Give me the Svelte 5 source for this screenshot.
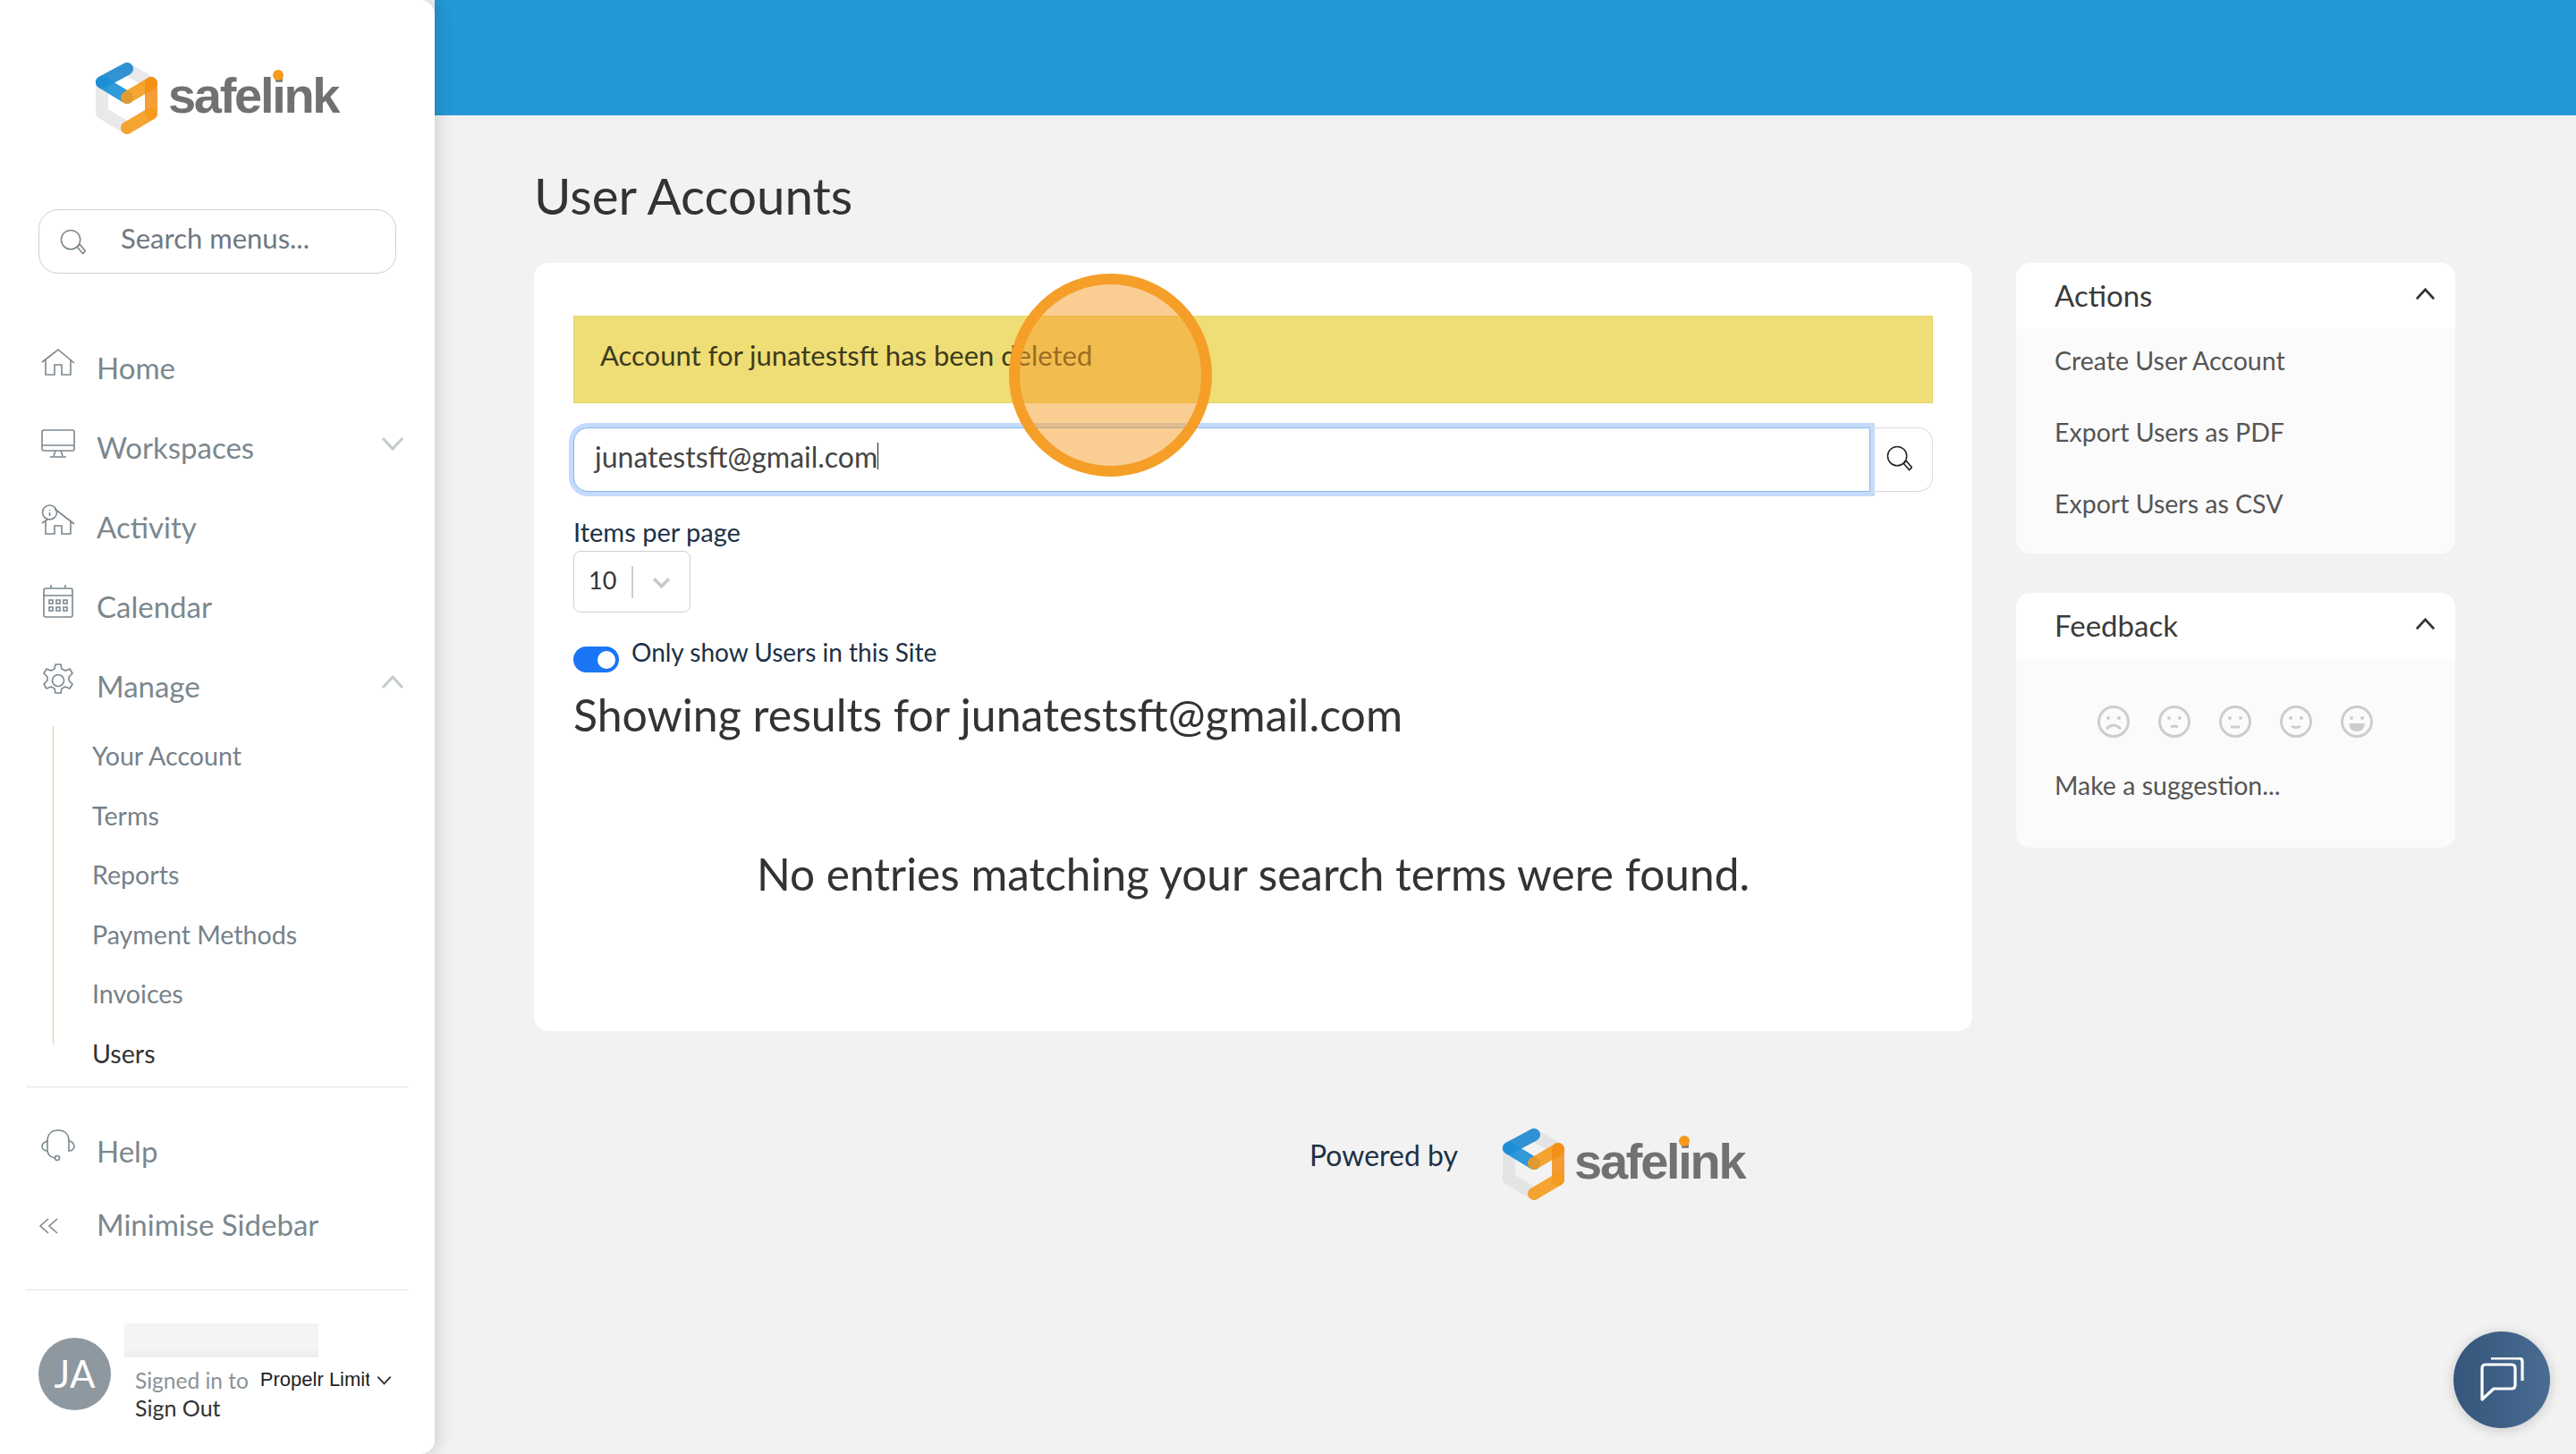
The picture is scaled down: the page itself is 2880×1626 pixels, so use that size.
<script>
  const nav = [
    { label: 'Home', icon: 'home' },
    { label: 'Workspaces', icon: 'desktop', caret: 'down' },
    { label: 'Activity', icon: 'activity' },
    { label: 'Calendar', icon: 'calendar' },
    { label: 'Manage', icon: 'gear', caret: 'up' }
  ];
  const manage = ['Your Account', 'Terms', 'Reports', 'Payment Methods', 'Invoices', 'Users'];
  const actions = ['Create User Account', 'Export Users as PDF', 'Export Users as CSV'];
  // mouth path for each feedback face, worst to best
  const mouths = ['M10 26q8-8 16 0', 'M14 24q4-2 8 0', 'M13 24h10', 'M13 23q5 3 10 0'];
</script>

{#snippet logo()}
  <svg class="mark" viewBox="0 0 73 80" fill="none" stroke-width="14" stroke-linecap="round">
    <g stroke="#dcdcdc" opacity=".6">
      <path d="M37 7 64 23" />
      <path d="M9 22V56" />
      <path d="M9 56 37 73" />
    </g>
    <path d="M37 7 9 22" stroke="#1b87cf" opacity=".9" />
    <path d="M9 22 37 39" stroke="#1b8fd6" opacity=".9" />
    <path d="M37 39 64 23" stroke="#f59a1c" opacity=".9" />
    <path d="M64 23V57" stroke="#f28d12" opacity=".85" />
    <path d="M64 57 37 73" stroke="#f59a1c" opacity=".9" />
  </svg>
  <span class="word">safel<span class="dotted">i<span class="dot"></span></span>nk</span>
{/snippet}

{#snippet navicon(name)}
  <svg class="nicon" viewBox="0 0 38 38" fill="none" stroke="#7b878e" stroke-width="1.6">
    {#if name === 'home'}
      <path d="M1 19 19 5l18 15" />
      <path d="M5 16v17h10V22h8v11h10V16" />
    {:else if name === 'desktop'}
      <rect x="1" y="6" width="36" height="23" rx="2" />
      <path d="M1 23h36M16 29l-2 6M22 29l2 6M10 36h18" />
    {:else if name === 'activity'}
      <circle cx="9.500" cy="9" r="8" />
      <path d="M9.500 6v1M9.500 9v4" />
      <path d="M1 21l6-4M15 5l22 17" />
      <path d="M5 19v14h10V24h8v9h10V19" />
    {:else if name === 'calendar'}
      <rect x="3" y="5" width="32" height="32" rx="2" />
      <path d="M3 13h32M11 1v4M27 1v4" />
      <path d="M9 18h4v4H9zM17 18h4v4h-4zM25 18h4v4h-4zM9 26h4v4H9zM17 26h4v4h-4zM25 26h4v4h-4z" />
    {:else if name === 'gear'}
      <circle cx="19" cy="19" r="6.500" />
      <path d="M16 1h6l1 5 4 2 5-2 3 5-4 4v4l4 4-3 5-5-2-4 2-1 5h-6l-1-5-4-2-5 2-3-5 4-4v-4l-4-4 3-5 5 2 4-2z" stroke-linejoin="round" />
    {:else if name === 'help'}
      <path d="M7 14C7 6 12 2 19 2s12 4 12 12" />
      <path d="M7 14c-3 1-6 3-6 6s3 5 6 5zM31 14v11c3 0 6-2 6-5s-3-6-6-6z" />
      <path d="M7 25c1 5 3 7 9 8" />
      <circle cx="18" cy="33" r="2.500" />
    {/if}
  </svg>
{/snippet}

{#snippet chevron(dir, cls)}
  <svg class={cls} viewBox="0 0 26 16" fill="none" stroke="currentColor" stroke-width="3">
    <path d={dir === 'up' ? 'M2 14 13 2l11 12' : 'M2 2l11 12L24 2'} />
  </svg>
{/snippet}

{#snippet glass(cls)}
  <svg class={cls} viewBox="0 0 30 30" fill="none" stroke="currentColor" stroke-width="1.600">
    <circle cx="12.500" cy="12.500" r="11" />
    <path d="M20 21l3-3 6.500 7.500-3 3z" />
  </svg>
{/snippet}

<div class="app">
  <aside class="sidebar">
    <div class="brand">{@render logo()}</div>

    <div class="menu-search">
      {@render glass('menu-glass')}
      <span>Search menus...</span>
    </div>

    <nav class="nav">
      {#each nav as item}
        <div class="nav-row">
          {@render navicon(item.icon)}
          <span>{item.label}</span>
          {#if item.caret}{@render chevron(item.caret, 'nav-caret')}{/if}
        </div>
      {/each}
    </nav>

    <ul class="submenu">
      {#each manage as link}
        <li class:current={link === 'Users'}>{link}</li>
      {/each}
    </ul>

    <div class="lower">
      <div class="nav-row short">
        {@render navicon('help')}
        <span>Help</span>
      </div>
      <div class="nav-row short">
        <svg class="collapse" viewBox="0 0 22 20" fill="none" stroke="#7b878e" stroke-width="1.600">
          <path d="M11 2 2 10l9 8M21 2l-9 8 9 8" />
        </svg>
        <span>Minimise Sidebar</span>
      </div>
    </div>

    <div class="account">
      <div class="avatar">JA</div>
      <div class="who">
        <div class="blurred"></div>
        <div class="site">
          <span class="signed">Signed in to</span>
          <span class="company">Propelr Limited</span>
          {@render chevron('down', 'site-caret')}
        </div>
        <div class="signout">Sign Out</div>
      </div>
    </div>
  </aside>

  <div class="page">
    <div class="topbar"></div>
    <div class="content">
      <h1>User Accounts</h1>
      <div class="columns">
        <main class="card">
          <div class="alert">Account for junatestsft has been deleted</div>

          <div class="search">
            <div class="field">junatestsft@gmail.com<span class="caret"></span></div>
            <div class="go">{@render glass('go-glass')}</div>
          </div>

          <div class="label">Items per page</div>
          <div class="select">
            <span>10</span>
            <i></i>
            <svg viewBox="0 0 20 12" fill="none" stroke="#c9c9c9" stroke-width="3.500"><path d="M2 2l8 8 8-8" /></svg>
          </div>

          <div class="toggle-row">
            <div class="toggle"><b></b></div>
            <span>Only show Users in this Site</span>
          </div>

          <h2>Showing results for junatestsft@gmail.com</h2>
          <p class="empty">No entries matching your search terms were found.</p>
        </main>

        <div class="side">
          <section class="panel actions">
            <header>Actions {@render chevron('up', 'panel-caret')}</header>
            <div class="panel-body">
              {#each actions as action}
                <div class="action">{action}</div>
              {/each}
            </div>
          </section>

          <section class="panel">
            <header>Feedback {@render chevron('up', 'panel-caret')}</header>
            <div class="panel-body feedback">
              <div class="faces">
                {#each mouths as d}
                  <svg viewBox="0 0 36 36" fill="none" stroke="#cdcdcd" stroke-width="3">
                    <circle cx="18" cy="18" r="16.500" />
                    <circle cx="12" cy="14" r="2" fill="#cdcdcd" stroke="none" />
                    <circle cx="24" cy="14" r="2" fill="#cdcdcd" stroke="none" />
                    <path {d} />
                  </svg>
                {/each}
                <svg viewBox="0 0 36 36" fill="none" stroke="#cdcdcd" stroke-width="3">
                  <circle cx="18" cy="18" r="16.500" />
                  <circle cx="12" cy="14" r="2" fill="#cdcdcd" stroke="none" />
                  <circle cx="24" cy="14" r="2" fill="#cdcdcd" stroke="none" />
                  <path d="M9 20h18q-1 9-9 9t-9-9z" fill="#cdcdcd" stroke="none" />
                </svg>
              </div>
              <div class="action">Make a suggestion...</div>
            </div>
          </section>
        </div>
      </div>

      <footer class="powered">
        <span class="by">Powered by</span>
        <div class="brand small">{@render logo()}</div>
      </footer>
    </div>
  </div>

  <div class="spot"></div>

  <div class="chat">
    <svg viewBox="0 0 50 50" fill="none" stroke="#fff" stroke-width="3.200" stroke-linejoin="round">
      <path d="M3 12q0-4 4-4h29q4 0 4 4v19q0 4-4 4H16L3 47z" />
      <path d="M13 1h31q4 0 4 4v21" />
    </svg>
  </div>
</div>

<style>
  :global(body) {
    background: #f2f2f2;
    overflow: hidden;
  }

  .app {
    position: relative;
    display: flex;
    width: 2880px;
    height: 1626px;
    overflow: hidden;
    font-family: Lato, "Noto Sans", sans-serif;
    color: #333;
  }

  .sidebar {
    position: relative;
    z-index: 2;
    display: flex;
    flex-direction: column;
    flex: none;
    box-sizing: border-box;
    width: 486px;
    padding-top: 70px;
    background: #fff;
    border-radius: 0 16px 16px 0;
    box-shadow: 4px 0 18px rgba(0, 0, 0, 0.14);
  }

  .brand {
    display: flex;
    align-items: center;
    gap: 10px;
    padding-left: 105px;
  }

  .brand.small {
    padding-left: 0;
    gap: 9px;
  }

  .mark {
    width: 73px;
    height: 80px;
    flex: none;
  }

  .word {
    margin-top: -6px;
    font-family: "Liberation Sans", sans-serif;
    font-weight: 700;
    font-size: 56px;
    letter-spacing: -2.300px;
    line-height: 1;
    color: #717171;
  }

  .dotted {
    position: relative;
  }

  .dot {
    position: absolute;
    top: 3px;
    left: 1px;
    width: 12px;
    height: 12px;
    border-radius: 50%;
    background: #f59a1c;
  }

  .menu-search {
    display: flex;
    align-items: center;
    box-sizing: border-box;
    width: 400px;
    height: 72px;
    margin: 84px 0 0 43px;
    padding: 0 0 8px 23px;
    border: 1px solid #cfcfcf;
    border-radius: 22px;
    font-size: 31px;
    color: #6f787f;
  }

  .menu-search :global(.menu-glass) {
    width: 29px;
    height: 29px;
    margin: 8px 39px 0 0;
    color: #7b878e;
  }

  .nav {
    margin-top: 60px;
  }

  .nav-row {
    display: flex;
    align-items: center;
    height: 89px;
    padding-left: 46px;
    font-size: 33px;
    color: #7b878e;
  }

  .nav-row.short {
    height: 82px;
  }

  .nicon {
    width: 38px;
    height: 38px;
    margin: -12px 24px 0 0;
    flex: none;
  }

  .collapse {
    width: 22px;
    height: 20px;
    margin: 4px 43px 0 -3px;
    flex: none;
  }

  .nav-row :global(.nav-caret) {
    width: 26px;
    height: 16px;
    margin: -8px 34px 0 auto;
    color: #c4cbcb;
  }

  .submenu {
    list-style: none;
    margin: 1px 0 0 59px;
    padding: 0 0 0 43px;
    height: 356px;
    border-left: 1px solid #f4c98c;
    font-size: 28.600px;
    color: #76818a;
  }

  .submenu li {
    height: 66.600px;
    line-height: 66.600px;
  }

  .submenu li.current {
    color: #333;
  }

  .lower {
    margin: 47px 29px 0;
    padding: 30px 0 32px;
    border-top: 1px solid #e4e4e4;
    border-bottom: 1px solid #e4e4e4;
  }

  .lower .nav-row {
    padding-left: 17px;
  }

  .account {
    display: flex;
    align-items: flex-start;
    padding: 37px 0 0 43px;
  }

  .avatar {
    flex: none;
    width: 81px;
    height: 81px;
    margin-top: 16px;
    border-radius: 50%;
    background: #8e98a0;
    color: #fff;
    font-size: 42px;
    line-height: 81px;
    text-align: center;
  }

  .who {
    margin-left: 27px;
    min-width: 0;
  }

  .blurred {
    width: 217px;
    height: 38px;
    margin-left: -12px;
    background: linear-gradient(#f4f4f4 70%, #eeeeee);
  }

  .site {
    display: flex;
    align-items: center;
    height: 40px;
    margin-top: 5px;
    font-size: 24.500px;
    color: #8a9299;
  }

  .company {
    width: 122px;
    margin-left: 13px;
    overflow: hidden;
    white-space: nowrap;
    font-family: "Liberation Sans", sans-serif;
    font-size: 22px;
    color: #222;
  }

  .site :global(.site-caret) {
    width: 17px;
    height: 11px;
    margin-left: 8px;
    color: #333;
  }

  .signout {
    margin-top: -2px;
    font-size: 25px;
    color: #333;
    line-height: 26px;
  }

  .page {
    flex: 1;
    min-width: 0;
  }

  .topbar {
    height: 129px;
    background: #2497d6;
  }

  .content {
    padding-left: 111px;
  }

  h1 {
    box-sizing: border-box;
    height: 165px;
    margin: 0;
    padding-top: 58px;
    font-size: 56.500px;
    line-height: 62px;
    font-weight: 400;
  }

  .columns {
    display: grid;
    grid-template-columns: 1608px 491px;
    gap: 49px;
    align-items: start;
  }

  .card {
    box-sizing: border-box;
    height: 859px;
    padding: 59px 44px 0;
    background: #fff;
    border-radius: 16px;
  }

  .alert {
    box-sizing: border-box;
    height: 98px;
    padding: 24px 29px 0;
    background: #efdd75;
    border: 1px solid #e6d56a;
    font-size: 31px;
    line-height: 38px;
    color: #3d3b1e;
  }

  .search {
    display: flex;
    height: 72px;
    margin-top: 27px;
  }

  .field {
    flex: 1;
    display: flex;
    align-items: center;
    padding: 0 0 8px 23px;
    background: #fff;
    border: 1px solid #86b7ec;
    border-radius: 16px 0 0 16px;
    box-shadow: 0 0 0 5px #c5dbfb;
    font-size: 32px;
    color: #444;
  }

  .caret {
    width: 1px;
    height: 30px;
    background: #222;
  }

  .go {
    display: flex;
    align-items: center;
    justify-content: center;
    box-sizing: border-box;
    width: 70px;
    padding: 0 5px 3px 0;
    border: 1px solid #dcdcdc;
    border-left: 0;
    border-radius: 0 16px 16px 0;
  }

  .go :global(.go-glass) {
    width: 29px;
    height: 31px;
    color: #222;
  }

  .label {
    margin-top: 27px;
    font-size: 29px;
    line-height: 36px;
    color: #1c3146;
  }

  .select {
    display: flex;
    align-items: center;
    box-sizing: border-box;
    width: 131px;
    height: 69px;
    margin-top: 3px;
    padding: 0 0 4px 16px;
    border: 1px solid #cfcfcf;
    border-radius: 8px;
    font-size: 27px;
    color: #333;
  }

  .select i {
    width: 2px;
    height: 36px;
    margin: 4px 0 0 17px;
    background: #cfcfcf;
  }

  .select svg {
    width: 21px;
    height: 13px;
    margin: 6px 0 0 21px;
  }

  .toggle-row {
    display: flex;
    align-items: flex-start;
    margin-top: 26px;
    font-size: 28px;
    line-height: 36px;
    color: #1c3146;
  }

  .toggle {
    flex: none;
    position: relative;
    width: 51px;
    height: 29px;
    margin: 12px 14px 0 0;
    border-radius: 15px;
    background: #1a76f5;
  }

  .toggle b {
    position: absolute;
    top: 5px;
    right: 4px;
    width: 20px;
    height: 20px;
    border-radius: 50%;
    background: #fff;
  }

  h2 {
    margin: 17px 0 0;
    font-size: 50px;
    line-height: 60px;
    font-weight: 400;
  }

  .empty {
    margin: 118px 0 0;
    text-align: center;
    font-size: 49.600px;
    line-height: 60px;
  }

  .side {
    display: flex;
    flex-direction: column;
    gap: 44px;
  }

  .panel {
    overflow: hidden;
    background: #fbfbfb;
    border-radius: 16px;
  }

  .panel header {
    position: relative;
    height: 58px;
    padding: 16px 0 0 43px;
    background: #fff;
    font-size: 33px;
    line-height: 40px;
    color: #3a3a3a;
  }

  .panel header :global(.panel-caret) {
    position: absolute;
    top: 28px;
    right: 22px;
    width: 23px;
    height: 14px;
    color: #333;
  }

  .panel-body {
    box-sizing: border-box;
    padding: 12px 43px 0;
    height: 251px;
  }

  .action {
    box-sizing: border-box;
    height: 80px;
    padding-top: 3px;
    font-size: 28.500px;
    line-height: 40px;
    color: #555;
  }

  .panel-body.feedback {
    height: 211px;
    padding-top: 52px;
  }

  .faces {
    display: flex;
    justify-content: center;
    gap: 32px;
    height: 66px;
    margin-left: -1px;
  }

  .faces svg {
    width: 36px;
    height: 36px;
  }

  .powered {
    display: flex;
    align-items: center;
    margin: 109px 0 0 867px;
    gap: 48px;
    font-size: 32px;
    color: #1c3146;
  }

  .by {
    margin-top: -21px;
  }

  .spot {
    position: absolute;
    z-index: 3;
    left: 1128px;
    top: 306px;
    box-sizing: border-box;
    width: 227px;
    height: 227px;
    border: 12px solid #f59e28;
    border-radius: 50%;
    background: rgba(245, 158, 40, 0.5);
  }

  .chat {
    position: absolute;
    z-index: 3;
    left: 2743px;
    top: 1489px;
    display: flex;
    align-items: center;
    justify-content: center;
    width: 108px;
    height: 108px;
    border-radius: 50%;
    background: linear-gradient(90deg, #35557a, #4a6c92);
    box-shadow: 0 2px 14px rgba(0, 0, 0, 0.18);
  }

  .chat svg {
    width: 50px;
    height: 50px;
  }
</style>
